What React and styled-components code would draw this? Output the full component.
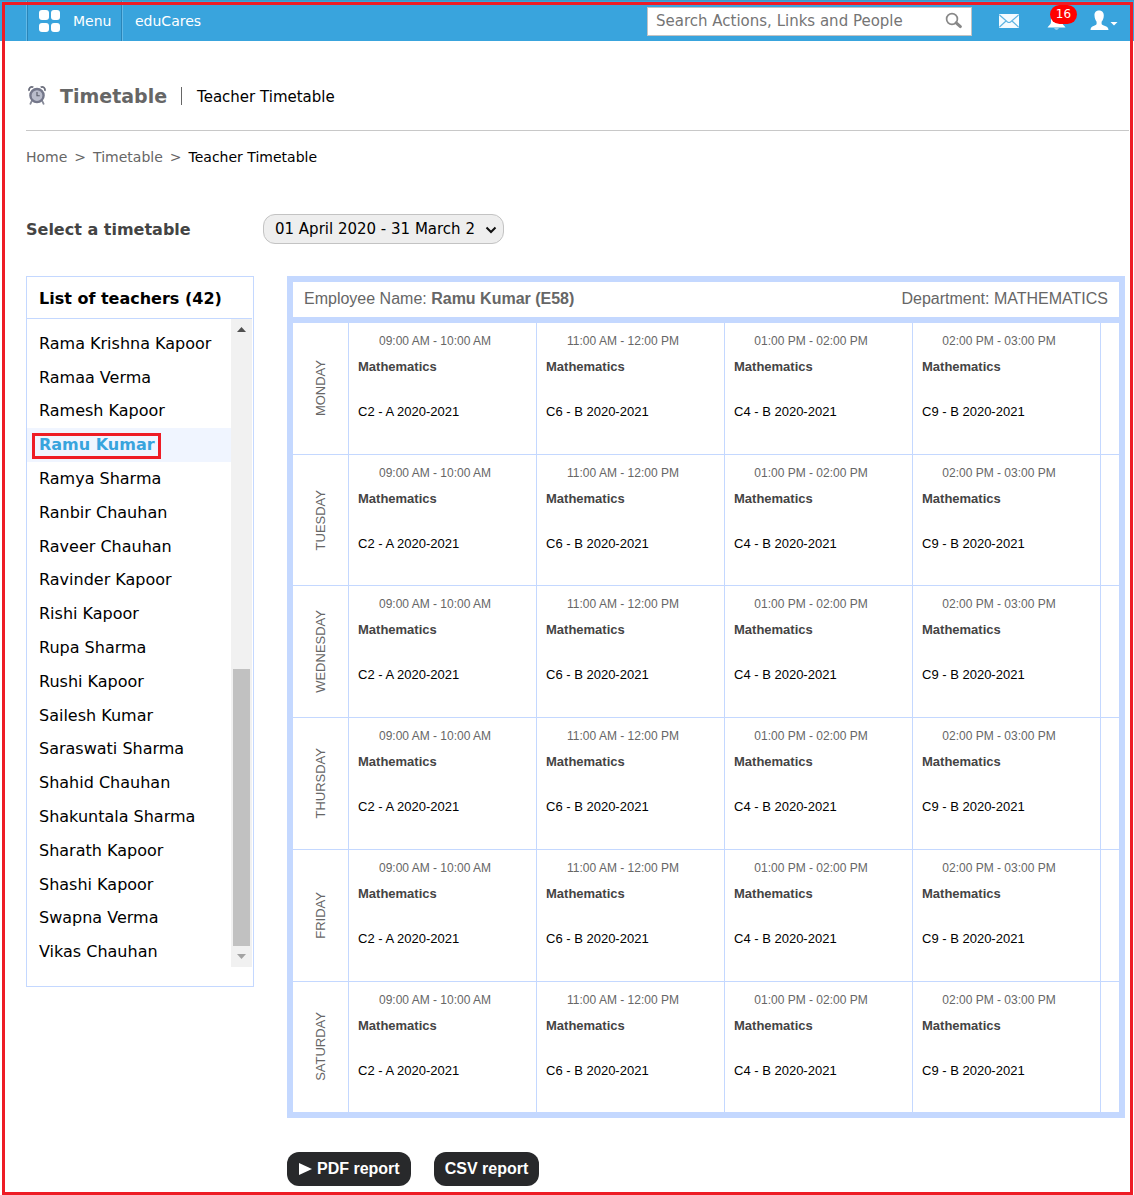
import React from 'react';
import styled, { createGlobalStyle } from 'styled-components';

const sans = '"DejaVu Sans", Verdana, sans-serif';
const arial = '"Liberation Sans", Arial, sans-serif';
const blue = '#39a4dd';
const line = '#c4d8ff';
const red = '#ee1c25';

const GlobalStyle = createGlobalStyle`
  *, *::before, *::after { box-sizing: border-box; }
  body { margin: 0; background: #fff; color: #000; font-family: ${sans}; }
  a { color: inherit; text-decoration: none; }
  h1, h2, p, ul, ol { margin: 0; padding: 0; }
  ul, ol { list-style: none; }
  button { font: inherit; border: 0; padding: 0; background: none; color: inherit; cursor: pointer; }
`;

const Page = styled.div`
  position: relative;
  min-height: 100vh;
`;

const Outline = styled.div`
  position: absolute;
  inset: 2px 1px 0 2px;
  border: 3px solid ${red};
  pointer-events: none;
`;

const TopBar = styled.header`
  display: flex;
  align-items: center;
  height: 41px;
  padding: 0 16px 0 26px;
  background: ${blue};
  border-top: 1px solid #3f97c7;
  color: #fff;
  font-size: 14px;
`;

const MenuButton = styled.button`
  display: flex;
  align-items: center;
  gap: 12px;
  width: 97px;
  height: 40px;
  padding-left: 11px;
  border-left: 1px solid #63b9e6;
  border-right: 1px solid #63b9e6;
  box-shadow: inset 1px 0 #2a85b8, inset -1px 0 #2a85b8;
`;

const Brand = styled.a`
  margin-left: 12px;
`;

const SearchBox = styled.form`
  display: flex;
  align-items: center;
  width: 325px;
  height: 29px;
  margin-left: auto;
  padding: 0 8px;
  background: #fff;
  border: 1px solid #c3c3c3;
`;

const SearchInput = styled.input`
  flex: 1;
  min-width: 0;
  border: 0;
  padding: 0;
  outline: 0;
  background: transparent;
  font: 15px ${sans};
  color: #757575;
  &::placeholder { color: #757575; opacity: 1; }
`;

const Actions = styled.nav`
  display: flex;
  align-items: center;
  margin-left: 27px;
  gap: 24px;
`;

const IconButton = styled.button`
  position: relative;
  display: flex;
  align-items: center;
`;

const Badge = styled.span`
  position: absolute;
  top: -5px;
  left: 3px;
  width: 27px;
  height: 19px;
  border-radius: 10px;
  background: #f00;
  font-size: 12px;
  line-height: 18px;
  text-align: center;
`;

const Content = styled.main`
  padding: 0 5px 9px 26px;
`;

const TitleRow = styled.div`
  display: flex;
  align-items: center;
  height: 90px;
  padding-top: 20px;
  border-bottom: 1px solid #c8c8c8;
`;

const Title = styled.h1`
  margin-left: 12px;
  padding-right: 14px;
  font-size: 19px;
  line-height: 22px;
  color: #666;
`;

const Subtitle = styled.p`
  padding: 2px 0 0 15px;
  border-left: 1px solid #666;
  font-size: 15px;
  line-height: 16px;
`;

const Crumbs = styled.ol`
  display: flex;
  gap: 7px;
  padding-top: 16px;
  font-size: 14px;
  line-height: 20px;
  color: #666;
`;

const Crumb = styled.li`
  color: ${(p) => (p.$current ? '#000' : '#666')};
`;

const PickerRow = styled.div`
  display: flex;
  align-items: center;
  height: 30px;
  margin-top: 47px;
`;

const PickerLabel = styled.label`
  width: 237px;
  font-size: 16px;
  font-weight: bold;
  color: #444;
`;

const PickerBox = styled.div`
  position: relative;
  width: 241px;
`;

const Picker = styled.select`
  appearance: none;
  display: block;
  width: 100%;
  height: 30px;
  padding: 0 28px 0 11px;
  border: 1px solid #c3c3c3;
  border-radius: 12px;
  background: #eee;
  color: #000;
  font: 15px ${sans};
`;

const PickerArrow = styled.svg`
  position: absolute;
  top: 12px;
  right: 7px;
  pointer-events: none;
`;

const Columns = styled.div`
  display: flex;
  align-items: flex-start;
  gap: 33px;
  margin-top: 32px;
  padding-right: 4px;
`;

const TeacherPanel = styled.aside`
  flex: 0 0 228px;
  padding: 0 1px 19px 0;
  border: 1px solid ${line};
`;

const PanelTitle = styled.h2`
  padding: 2px 0 0 12px;
  border-bottom: 1px solid ${line};
  font-size: 16px;
  line-height: 39px;
`;

const ListFrame = styled.div`
  display: flex;
  height: 648px;
`;

const TeacherList = styled.ul`
  flex: 1;
  display: grid;
  grid-auto-rows: 1fr;
  height: 650px;
  padding-top: 8px;
  font-size: 16px;
`;

const Teacher = styled.li`
  display: flex;
  align-items: center;
  padding-left: 12px;
  background: ${(p) => (p.$active ? '#f0f5ff' : 'transparent')};
  color: ${(p) => (p.$active ? blue : '#000')};
  font-weight: ${(p) => (p.$active ? 'bold' : 'normal')};
  white-space: nowrap;
`;

const TeacherLink = styled.a`
  position: relative;
  line-height: 20px;
`;

const Marker = styled.span`
  position: absolute;
  inset: -2px -6px -4px -7px;
  border: 3px solid ${red};
`;

const Scrollbar = styled.div`
  display: flex;
  flex-direction: column;
  width: 21px;
  background: #f1f1f1;
`;

const ScrollStep = styled.span`
  display: flex;
  align-items: center;
  justify-content: center;
  height: 21px;
`;

const ScrollTrack = styled.div`
  flex: 1;
  display: flex;
  flex-direction: column;
  justify-content: flex-end;
  padding: 0 2px;
`;

const ScrollThumb = styled.div`
  height: 277px;
  background: #c1c1c1;
`;

const Schedule = styled.section`
  flex: 1;
  min-width: 0;
  font-family: ${arial};
`;

const Frame = styled.div`
  overflow: hidden;
  border: 6px solid ${line};
`;

const FrameHead = styled.div`
  display: flex;
  justify-content: space-between;
  padding: 0 11px 2px;
  border-bottom: 6px solid ${line};
  font-size: 16px;
  line-height: 33px;
  color: #666;
`;

const Grid = styled.table`
  width: 100%;
  height: 789px;
  table-layout: fixed;
  border-collapse: separate;
  border-spacing: 0;
`;

const Col = styled.col`
  width: ${(p) => p.$w};
`;

const DayCell = styled.th`
  padding: 0;
  border-right: 1px solid ${line};
  border-bottom: 1px solid ${line};
  font-size: 13px;
  font-weight: normal;
  color: #666;
  tr:last-child > & { border-bottom: 0; }
`;

const DayName = styled.span`
  display: inline-block;
  vertical-align: middle;
  writing-mode: vertical-rl;
  transform: rotate(180deg);
`;

const Slot = styled.td`
  padding: 9px 24px 0 9px;
  border-right: ${(p) => (p.$last ? '0' : `1px solid ${line}`)};
  border-bottom: 1px solid ${line};
  vertical-align: top;
  font-size: 13px;
  line-height: 18px;
  tr:last-child > & { border-bottom: 0; }
`;

const Time = styled.p`
  font-size: 12px;
  text-align: center;
  color: #666;
  white-space: nowrap;
`;

const Subject = styled.p`
  margin-top: 8px;
  font-weight: bold;
  color: #444;
`;

const Class = styled.p`
  margin-top: 27px;
`;

const Reports = styled.div`
  display: flex;
  gap: 23px;
  margin-top: 34px;
`;

const ReportButton = styled.button`
  display: flex;
  align-items: center;
  gap: 5px;
  height: 34px;
  padding: 0 11px;
  border-radius: 12px;
  background: #28292b;
  color: #fff;
  font-size: 16px;
  font-weight: bold;
`;

const MenuIcon = () => (
  <svg width="23" height="23" viewBox="0 0 23 23" fill="#fff" aria-hidden="true">
    <rect x="1" y="0" width="10" height="10" rx="3" />
    <rect x="13" y="0" width="9" height="10" rx="3" />
    <rect x="1" y="13" width="10" height="9" rx="3" />
    <rect x="13" y="13" width="9" height="9" rx="3" />
  </svg>
);

const SearchIcon = () => (
  <svg width="18" height="18" viewBox="0 0 18 18" fill="none" stroke="#888" aria-hidden="true">
    <circle cx="7" cy="7" r="5.4" strokeWidth="1.7" />
    <path d="M11.2 10.8L15.4 14.6" strokeWidth="3" strokeLinecap="round" />
  </svg>
);

const MailIcon = () => (
  <svg width="24" height="14" viewBox="0 0 24 14" aria-hidden="true">
    <rect width="20" height="14" rx="1" fill="#f5fbff" />
    <path d="M0.5 1L8.5 8Q10 9 11.5 8L19.5 1M0.5 13L7 7M19.5 13L13 7" fill="none" stroke="#5eb4e2" strokeWidth="1.2" />
  </svg>
);

const BellIcon = () => (
  <svg width="19" height="22" viewBox="0 0 19 22" fill="#fff" aria-hidden="true">
    <path d="M9.5 1C5.5 1 4 4 4 8V12C4 14.5 1.500 15.500 0.500 17.500H18.500C17.500 15.500 15 14.500 15 12V8C15 4 13.500 1 9.500 1Z" />
    <path d="M7 18.600H12Q9.500 20.500 7 18.600Z" />
  </svg>
);

const UserIcon = () => (
  <svg width="28" height="22" viewBox="0 0 28 22" fill="#fff" aria-hidden="true">
    <path d="M9 0.500C5.800 0.500 4.300 2.700 4.500 5.500C4.600 8.300 5.500 10.300 6.600 11.700V13.800C6.600 15.800 0.500 15.500 0.500 20H18.500C18.500 15.500 11.600 15.800 11.600 13.800V11.700C13 10.300 13.700 8.300 13.800 5.500C13.900 2.700 12.200 0.500 9 0.500Z" />
    <path d="M20.500 12H27.500L24 15.500Z" />
  </svg>
);

const ClockIcon = () => (
  <svg width="22" height="22" viewBox="-1 0 24 24" fill="none" aria-hidden="true">
    <path d="M2.500 6.500A3.200 3.200 0 0 1 7 2.500M15 2.500A3.200 3.200 0 0 1 19.500 6.500" stroke="#6b6e7c" strokeWidth="2" />
    <path d="M5.500 17L3.800 20.500M16.500 17L18.200 20.500" stroke="#888b99" strokeWidth="2" strokeLinecap="round" />
    <circle cx="11" cy="11.500" r="7.200" fill="#b9bccb" stroke="#74778a" strokeWidth="2.600" />
    <path d="M11 7.500V11.700H14" stroke="#5b5e6c" strokeWidth="1.300" />
  </svg>
);

const Arrow = ({ down }) => (
  <svg width="9" height="5" viewBox="0 0 9 5" aria-hidden="true">
    <path d={down ? 'M0 0H9L4.5 5Z' : 'M0 5H9L4.5 0Z'} fill={down ? '#a3a3a3' : '#505050'} />
  </svg>
);

const teachers = [
  'Rama Krishna Kapoor', 'Ramaa Verma', 'Ramesh Kapoor', 'Ramu Kumar', 'Ramya Sharma',
  'Ranbir Chauhan', 'Raveer Chauhan', 'Ravinder Kapoor', 'Rishi Kapoor', 'Rupa Sharma',
  'Rushi Kapoor', 'Sailesh Kumar', 'Saraswati Sharma', 'Shahid Chauhan', 'Shakuntala Sharma',
  'Sharath Kapoor', 'Shashi Kapoor', 'Swapna Verma', 'Vikas Chauhan',
];

const days = ['MONDAY', 'TUESDAY', 'WEDNESDAY', 'THURSDAY', 'FRIDAY', 'SATURDAY'];

const slots = [
  { time: '09:00 AM - 10:00 AM', room: 'C2 - A 2020-2021' },
  { time: '11:00 AM - 12:00 PM', room: 'C6 - B 2020-2021' },
  { time: '01:00 PM - 02:00 PM', room: 'C4 - B 2020-2021' },
  { time: '02:00 PM - 03:00 PM', room: 'C9 - B 2020-2021' },
];

export default function App() {
  return (
    <Page>
      <GlobalStyle />
      <TopBar>
        <MenuButton type="button"><MenuIcon />Menu</MenuButton>
        <Brand href="#">eduCares</Brand>
        <SearchBox>
          <SearchInput type="text" aria-label="Search" placeholder="Search Actions, Links and People" />
          <SearchIcon />
        </SearchBox>
        <Actions>
          <IconButton type="button" aria-label="Messages"><MailIcon /></IconButton>
          <IconButton type="button" aria-label="Notifications"><BellIcon /><Badge>16</Badge></IconButton>
          <IconButton type="button" aria-label="Account"><UserIcon /></IconButton>
        </Actions>
      </TopBar>

      <Content>
        <TitleRow>
          <ClockIcon />
          <Title>Timetable</Title>
          <Subtitle>Teacher Timetable</Subtitle>
        </TitleRow>
        <Crumbs>
          <Crumb><a href="#">Home</a></Crumb>
          <Crumb>&gt;</Crumb>
          <Crumb><a href="#">Timetable</a></Crumb>
          <Crumb>&gt;</Crumb>
          <Crumb $current>Teacher Timetable</Crumb>
        </Crumbs>

        <PickerRow>
          <PickerLabel htmlFor="timetable">Select a timetable</PickerLabel>
          <PickerBox>
            <Picker id="timetable">
              <option>01 April 2020 - 31 March 2021</option>
            </Picker>
            <PickerArrow width="12" height="8" viewBox="0 0 12 8" fill="none" aria-hidden="true">
              <path d="M1.500 1.500L6 6L10.500 1.500" stroke="#111" strokeWidth="2" />
            </PickerArrow>
          </PickerBox>
        </PickerRow>

        <Columns>
          <TeacherPanel>
            <PanelTitle>List of teachers (42)</PanelTitle>
            <ListFrame>
              <TeacherList>
                {teachers.map((name) => {
                  const active = name === 'Ramu Kumar';
                  return (
                    <Teacher key={name} $active={active}>
                      <TeacherLink href="#">{name}{active && <Marker />}</TeacherLink>
                    </Teacher>
                  );
                })}
              </TeacherList>
              <Scrollbar aria-hidden="true">
                <ScrollStep><Arrow /></ScrollStep>
                <ScrollTrack><ScrollThumb /></ScrollTrack>
                <ScrollStep><Arrow down /></ScrollStep>
              </Scrollbar>
            </ListFrame>
          </TeacherPanel>

          <Schedule>
            <Frame>
              <FrameHead>
                <span>Employee Name: <b>Ramu Kumar (E58)</b></span>
                <span>Department: MATHEMATICS</span>
              </FrameHead>
              <Grid>
                <colgroup>
                  <Col $w="56px" />
                  {slots.map((s) => <Col key={s.time} $w="188px" />)}
                  <Col $w="auto" />
                </colgroup>
                <tbody>
                  {days.map((day) => (
                    <tr key={day}>
                      <DayCell scope="row"><DayName>{day}</DayName></DayCell>
                      {slots.map((s) => (
                        <Slot key={s.time}>
                          <Time>{s.time}</Time>
                          <Subject>Mathematics</Subject>
                          <Class>{s.room}</Class>
                        </Slot>
                      ))}
                      <Slot $last />
                    </tr>
                  ))}
                </tbody>
              </Grid>
            </Frame>
            <Reports>
              <ReportButton type="button">
                <svg width="14" height="12" viewBox="0 0 14 12" aria-hidden="true">
                  <path d="M1 0V12L14 6Z" fill="#fff" />
                </svg>
                PDF report
              </ReportButton>
              <ReportButton type="button">CSV report</ReportButton>
            </Reports>
          </Schedule>
        </Columns>
      </Content>
      <Outline />
    </Page>
  );
}
